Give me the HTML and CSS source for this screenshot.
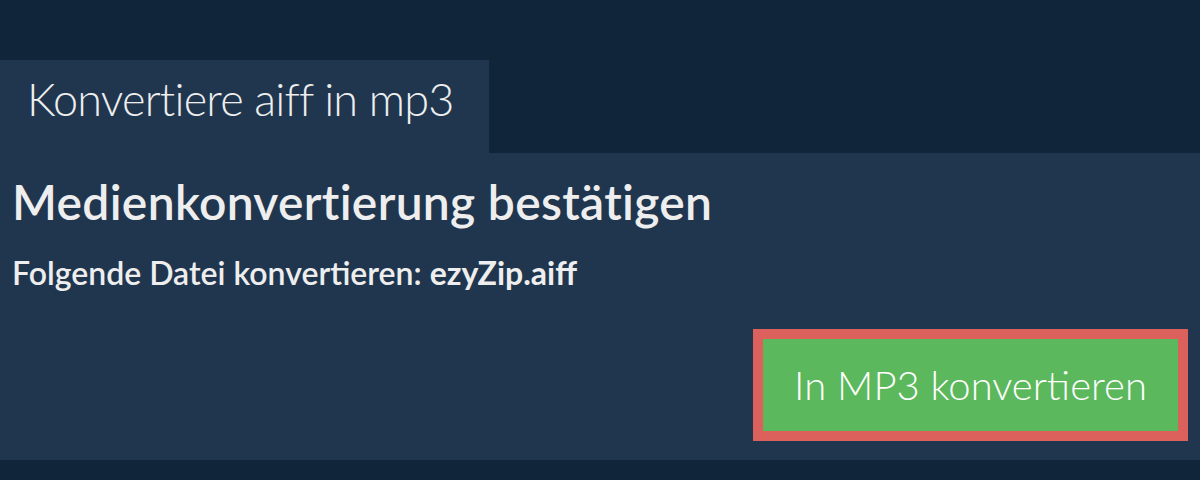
FILE: index.html
```html
<!DOCTYPE html>
<html lang="de">
<head>
    <meta charset="UTF-8">
    <meta name="viewport" content="width=device-width, initial-scale=1.0">
    <title>Konvertiere aiff in mp3</title>
    <link rel="stylesheet" href="styles.css">
</head>
<body>
    <div class="page">
        <div class="tab">Konvertiere aiff in mp3</div>
        <div class="panel">
            <h1 class="title">Medienkonvertierung bestätigen</h1>
            <p class="file">Folgende Datei konvertieren: <strong>ezyZip.aiff</strong></p>
            <div class="actions">
                <button class="convert">In MP3 konvertieren</button>
            </div>
        </div>
    </div>
</body>
</html>
```

FILE: styles.css
```css
body {
    margin: 0;
    padding: 0;
    background-color: #10243a;
    font-family: Lato, "Open Sans", sans-serif;
    color: #eeeeee;
}
.page {
    padding-top: 60px;
}
.tab {
    box-sizing: border-box;
    width: 489px;
    height: 93px;
    background-color: #20364f;
    font-size: 45px;
    font-weight: 300;
    line-height: 54px;
    letter-spacing: -0.8px;
    padding: 12px 0 0 27px;
}
.panel {
    background-color: #20364f;
    padding: 20px 12px 19px 12px;
}
.title {
    margin: 0;
    font-size: 48px;
    font-weight: 600;
    line-height: 58px;
    letter-spacing: 0.3px;
}
.file {
    margin: 23px 0 0;
    font-size: 32px;
    font-weight: 600;
    line-height: 38px;
}
.file strong {
    font-weight: 700;
}
.actions {
    display: flex;
    justify-content: flex-end;
    margin-top: 37px;
}
.convert {
    background-color: #5cb85c;
    border: 10px solid #dc605c;
    color: #ffffff;
    font-family: Lato, "Open Sans", sans-serif;
    font-size: 40px;
    font-weight: 300;
    width: 435px;
    height: 112px;
    padding: 0;
    cursor: pointer;
}
```
